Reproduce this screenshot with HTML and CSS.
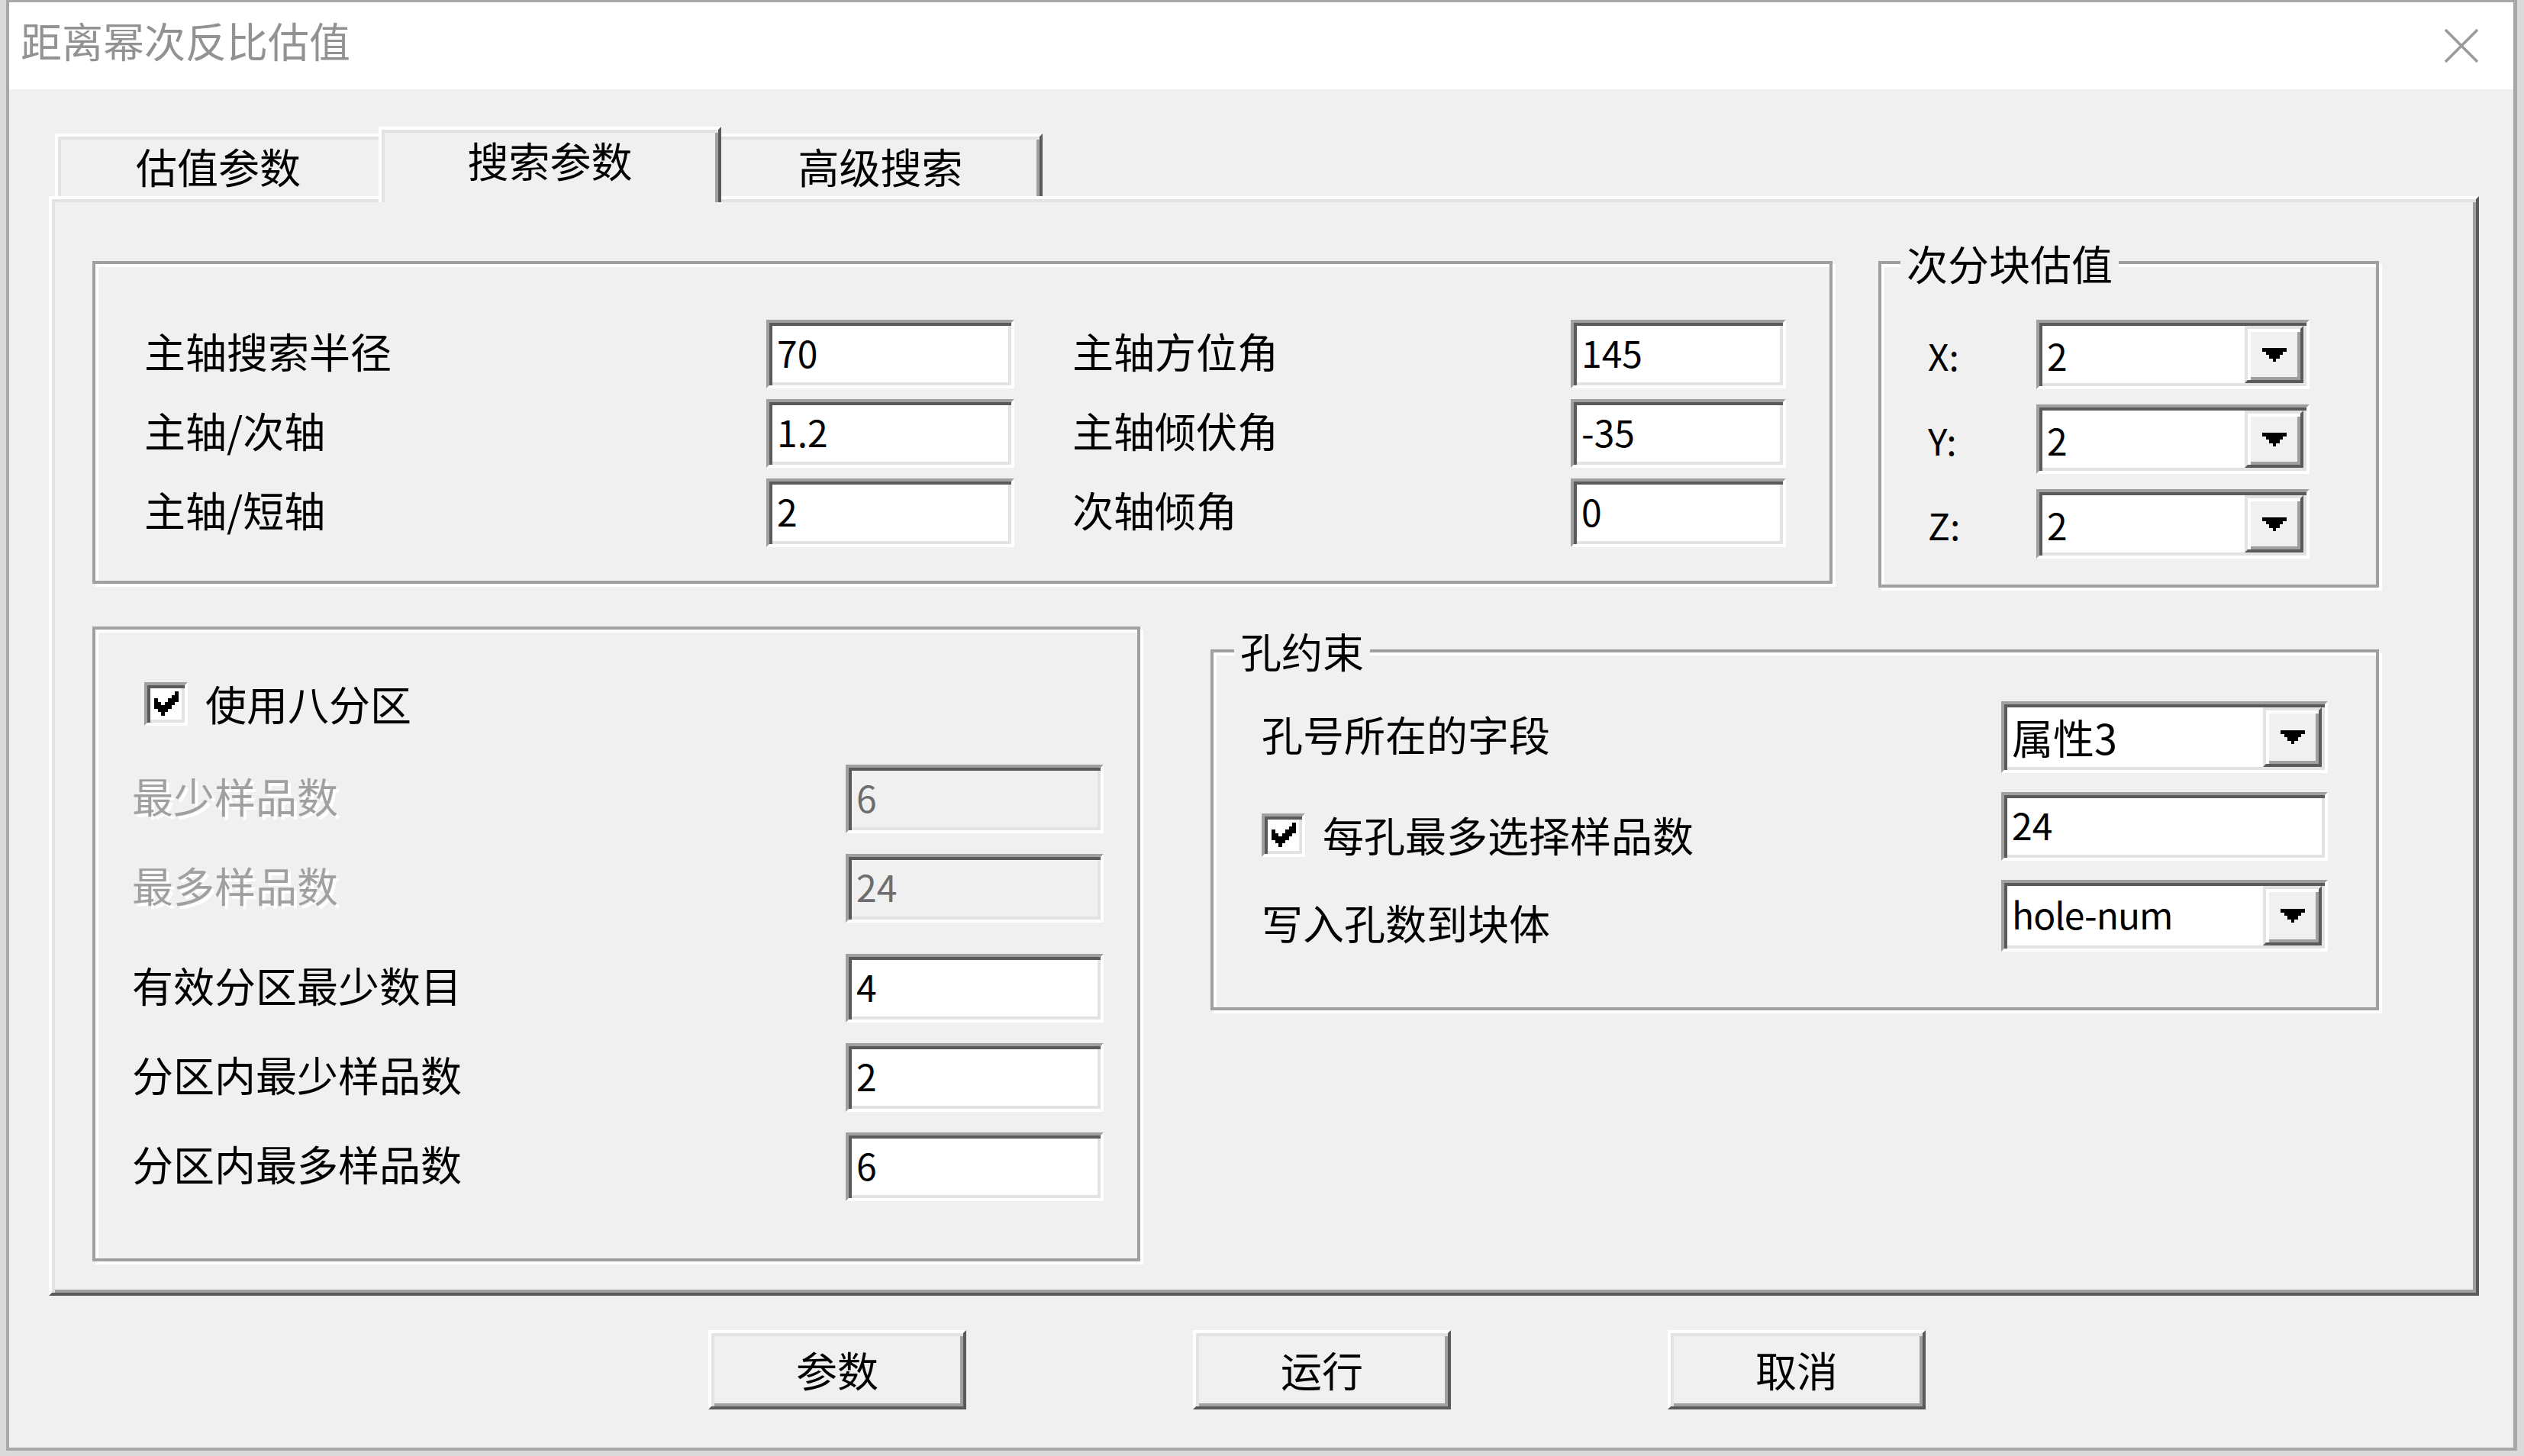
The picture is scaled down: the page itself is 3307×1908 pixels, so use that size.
FILE: index.html
```html
<!DOCTYPE html>
<html lang="zh-CN">
<head>
<meta charset="utf-8">
<title>距离幂次反比估值</title>
<link rel="stylesheet" href="styles.css">
</head>
<body>
<div class="window">
  <div class="titlebar">
    <span class="title">距离幂次反比估值</span>
    <svg class="close" viewBox="0 0 46 46"><path d="M2 2 L44 44 M44 2 L2 44" stroke="#9a9a9a" stroke-width="3.5" fill="none"/></svg>
  </div>
  <div class="client">
    <div class="tabs">
      <div class="tab tab-first">估值参数</div>
      <div class="tab tab-active">搜索参数</div>
      <div class="tab tab-last">高级搜索</div>
    </div>
    <div class="panel">
      <div class="row-top">
        <div class="box box-a">
          <div class="grid-a">
            <span class="lbl">主轴搜索半径</span><div class="edit">70</div><span></span><span class="lbl">主轴方位角</span><div class="edit">145</div>
            <span class="lbl">主轴/次轴</span><div class="edit">1.2</div><span></span><span class="lbl">主轴倾伏角</span><div class="edit">-35</div>
            <span class="lbl">主轴/短轴</span><div class="edit">2</div><span></span><span class="lbl">次轴倾角</span><div class="edit">0</div>
          </div>
        </div>
        <div class="box box-c">
          <span class="legend legend-c">次分块估值</span>
          <div class="grid-c">
            <span class="axis">X:</span>
            <div class="combo"><span class="val">2</span><span class="drop"><svg class="arrow" viewBox="0 0 7 4" shape-rendering="crispEdges"><rect x="0" y="0" width="7" height="1"/><rect x="1" y="1" width="5" height="1"/><rect x="2" y="2" width="3" height="1"/><rect x="3" y="3" width="1" height="1"/></svg></span></div>
            <span class="axis">Y:</span>
            <div class="combo"><span class="val">2</span><span class="drop"><svg class="arrow" viewBox="0 0 7 4" shape-rendering="crispEdges"><rect x="0" y="0" width="7" height="1"/><rect x="1" y="1" width="5" height="1"/><rect x="2" y="2" width="3" height="1"/><rect x="3" y="3" width="1" height="1"/></svg></span></div>
            <span class="axis">Z:</span>
            <div class="combo"><span class="val">2</span><span class="drop"><svg class="arrow" viewBox="0 0 7 4" shape-rendering="crispEdges"><rect x="0" y="0" width="7" height="1"/><rect x="1" y="1" width="5" height="1"/><rect x="2" y="2" width="3" height="1"/><rect x="3" y="3" width="1" height="1"/></svg></span></div>
          </div>
        </div>
      </div>
      <div class="row-bottom">
        <div class="box box-b">
          <div class="cb-line cb-first">
            <span class="checkbox"><svg class="check" viewBox="0 0 7 7" shape-rendering="crispEdges"><rect x="6" y="0" width="1" height="1"/><rect x="5" y="1" width="2" height="1"/><rect x="0" y="2" width="1" height="1"/><rect x="4" y="2" width="3" height="1"/><rect x="0" y="3" width="2" height="1"/><rect x="3" y="3" width="3" height="1"/><rect x="0" y="4" width="5" height="1"/><rect x="1" y="5" width="3" height="1"/><rect x="2" y="6" width="1" height="1"/></svg></span>
            <span class="lbl">使用八分区</span>
          </div>
          <div class="list-b">
            <div class="row-b"><span class="lbl disabled">最少样品数</span><div class="edit edit-disabled">6</div></div>
            <div class="row-b"><span class="lbl disabled">最多样品数</span><div class="edit edit-disabled">24</div></div>
            <div class="row-b row-extra"><span class="lbl">有效分区最少数目</span><div class="edit">4</div></div>
            <div class="row-b"><span class="lbl">分区内最少样品数</span><div class="edit">2</div></div>
            <div class="row-b"><span class="lbl">分区内最多样品数</span><div class="edit">6</div></div>
          </div>
        </div>
        <div class="box box-d">
          <span class="legend legend-d">孔约束</span>
          <div class="grid-d">
            <span class="lbl">孔号所在的字段</span>
            <div class="combo combo-d"><span class="val">属性3</span><span class="drop"><svg class="arrow" viewBox="0 0 7 4" shape-rendering="crispEdges"><rect x="0" y="0" width="7" height="1"/><rect x="1" y="1" width="5" height="1"/><rect x="2" y="2" width="3" height="1"/><rect x="3" y="3" width="1" height="1"/></svg></span></div>
            <div class="cb-line cb-second">
              <span class="checkbox"><svg class="check" viewBox="0 0 7 7" shape-rendering="crispEdges"><rect x="6" y="0" width="1" height="1"/><rect x="5" y="1" width="2" height="1"/><rect x="0" y="2" width="1" height="1"/><rect x="4" y="2" width="3" height="1"/><rect x="0" y="3" width="2" height="1"/><rect x="3" y="3" width="3" height="1"/><rect x="0" y="4" width="5" height="1"/><rect x="1" y="5" width="3" height="1"/><rect x="2" y="6" width="1" height="1"/></svg></span>
              <span class="lbl">每孔最多选择样品数</span>
            </div>
            <div class="edit">24</div>
            <span class="lbl lbl-low">写入孔数到块体</span>
            <div class="combo combo-d"><span class="val latin">hole-num</span><span class="drop"><svg class="arrow" viewBox="0 0 7 4" shape-rendering="crispEdges"><rect x="0" y="0" width="7" height="1"/><rect x="1" y="1" width="5" height="1"/><rect x="2" y="2" width="3" height="1"/><rect x="3" y="3" width="1" height="1"/></svg></span></div>
          </div>
        </div>
      </div>
    </div>
    <div class="buttons">
      <div class="push">参数</div>
      <div class="push push-2">运行</div>
      <div class="push push-3">取消</div>
    </div>
  </div>
</div>
</body>
</html>
```
FILE: styles.css
```css
* { box-sizing: border-box; }
html, body { margin: 0; padding: 0; }
body {
  background: #dadada;
  width: 3307px;
  height: 1908px;
  overflow: hidden;
  font-family: "Noto Sans CJK SC", "Noto Sans", sans-serif;
  font-size: 54px;
  line-height: 60px;
  color: #000;
}
.window {
  margin-left: 8px;
  width: 3290px;
  height: 1901px;
  border: 4px solid #a8a8a8;
  border-top-width: 3px;
  border-right-width: 5px;
  background: #f0f0f0;
  display: flex;
  flex-direction: column;
}
.titlebar {
  height: 114px;
  flex: none;
  background: #fff;
  display: flex;
  align-items: center;
  justify-content: space-between;
  padding: 0 45px 0 15px;
}
.title { color: #929292; font-size: 54px; line-height: 60px; padding-bottom: 14px; }
.close { width: 46px; height: 46px; display: block; }
.client { flex: 1; display: flex; flex-direction: column; }

/* tabs */
.tabs {
  display: flex;
  align-items: flex-end;
  margin: 49px 0 0 60px;
  height: 91px;
  position: relative;
  z-index: 1;
  flex: none;
}
.tab {
  height: 82px;
  background: #f0f0f0;
  text-align: center;
  padding-top: 9px;
  flex: none;
}
.tab-first {
  width: 424px;
  border-top: 4px solid #fff;
  border-left: 4px solid #fff;
  box-shadow: inset 4px 4px 0 #e3e3e3;
}
.tab-active {
  width: 449px;
  height: 99px;
  margin-bottom: -8px;
  padding-top: 10px;
  border-top: 4px solid #fff;
  border-left: 4px solid #fff;
  border-right: 4px solid #5a5a5a;
  box-shadow: inset 4px 4px 0 #e3e3e3, inset -4px 0 0 #a0a0a0;
}
.tab-last {
  width: 421px;
  border-top: 4px solid #fff;
  border-right: 4px solid #5a5a5a;
  box-shadow: inset 0 4px 0 #e3e3e3, inset -4px 0 0 #a0a0a0;
}

/* panel */
.panel {
  margin-left: 52px;
  width: 3184px;
  height: 1441px;
  flex: none;
  border: 4px solid;
  border-color: #fff #5a5a5a #5a5a5a #fff;
  box-shadow: inset 4px 4px 0 #e3e3e3, inset -4px -4px 0 #a0a0a0;
}
.row-top { display: flex; align-items: flex-start; margin: 81px 0 0 53px; }
.row-bottom { display: flex; align-items: flex-start; margin: 51px 0 0 53px; }

.box {
  position: relative;
  flex: none;
  border: 4px solid #a0a0a0;
  box-shadow: inset 4px 4px 0 #fff, 4px 4px 0 #fff;
}
.legend {
  position: absolute;
  background: #f0f0f0;
  padding: 0 8px;
  line-height: 60px;
  white-space: nowrap;
}
.legend-c { top: -31px; left: 25px; }
.legend-d { top: -32px; left: 27px; }

.box-a { width: 2280px; height: 423px; }
.box-c { width: 656px; height: 428px; margin-left: 60px; }
.box-b { width: 1373px; height: 832px; }
.box-d { width: 1531px; height: 473px; margin: 30px 0 0 92px; }

.lbl { white-space: nowrap; }
.grid-a .lbl, .row-b .lbl, .grid-d > .lbl { padding-bottom: 8px; }
.disabled { color: #a0a0a0; text-shadow: 4px 4px 0 #fff; }

.grid-a {
  display: grid;
  grid-template-columns: 815px 325px 76px 653px 282px;
  grid-auto-rows: 90px;
  row-gap: 14px;
  align-items: center;
  padding: 73px 0 0 64px;
}
.grid-c {
  display: grid;
  grid-template-columns: 142px 358px;
  grid-auto-rows: 91px;
  row-gap: 20px;
  align-items: center;
  padding: 73px 0 0 61px;
}
.axis { font-size: 48px; }
.grid-d {
  display: grid;
  grid-template-columns: 969px 428px;
  grid-template-rows: 94px 90px 94px;
  row-gap: 25px;
  align-items: center;
  padding: 64px 0 0 63px;
}

/* edit fields */
.edit {
  height: 90px;
  background: #fff;
  border: 4px solid;
  border-color: #a0a0a0 #fff #fff #a0a0a0;
  box-shadow: inset 4px 4px 0 #5a5a5a, inset -4px -4px 0 #e3e3e3;
  padding: 0 0 6px 10px;
  display: flex;
  align-items: center;
  font-size: 48px;
}
.edit-disabled { background: #f0f0f0; color: #6d6d6d; }

/* combo */
.combo {
  height: 91px;
  background: #fff;
  border: 4px solid;
  border-color: #a0a0a0 #fff #fff #a0a0a0;
  box-shadow: inset 4px 4px 0 #5a5a5a, inset -4px -4px 0 #e3e3e3;
  display: flex;
}
.combo-d { height: 94px; }
.combo .val {
  flex: 1;
  display: flex;
  align-items: center;
  padding-left: 10px;
  font-size: 48px;
}
.combo-d .val { font-size: 54px; }
.combo-d .val.latin { font-size: 48px; letter-spacing: -1px; padding-bottom: 6px; }
.drop {
  width: 77px;
  margin: 4px 4px 4px 0;
  background: #f0f0f0;
  border: 4px solid;
  border-color: #e3e3e3 #5a5a5a #5a5a5a #e3e3e3;
  box-shadow: inset 4px 4px 0 #fff, inset -4px -4px 0 #a0a0a0;
  display: flex;
  align-items: center;
  justify-content: center;
}
.arrow { width: 32px; height: 18px; display: block; fill: #000; }

/* checkbox */
.cb-line { display: flex; align-items: center; }
.cb-first { margin: 67px 0 0 64px; }
.cb-second { margin-top: 22px; }
.lbl-low { margin-top: 26px; }
.checkbox {
  width: 57px;
  height: 57px;
  flex: none;
  background: #fff;
  border: 4px solid;
  border-color: #a0a0a0 #fff #fff #a0a0a0;
  box-shadow: inset 4px 4px 0 #5a5a5a, inset -4px -4px 0 #e3e3e3;
  display: flex;
  align-items: center;
  justify-content: center;
  margin-right: 23px;
}
.check { width: 32px; height: 32px; display: block; fill: #000; }

.list-b { display: flex; flex-direction: column; gap: 27px; margin: 50px 0 0 48px; }
.row-b {
  display: grid;
  grid-template-columns: 935px 338px;
  height: 90px;
  align-items: center;
}
.row-extra { margin-top: 14px; }

/* buttons */
.buttons { display: flex; margin: 45px 0 0 916px; flex: none; }
.push {
  width: 338px;
  height: 104px;
  border: 4px solid;
  border-color: #fff #5a5a5a #5a5a5a #fff;
  box-shadow: inset 4px 4px 0 #e3e3e3, inset -4px -4px 0 #a0a0a0;
  display: flex;
  align-items: center;
  justify-content: center;
}
.push-2 { margin-left: 297px; }
.push-3 { margin-left: 284px; }
```
